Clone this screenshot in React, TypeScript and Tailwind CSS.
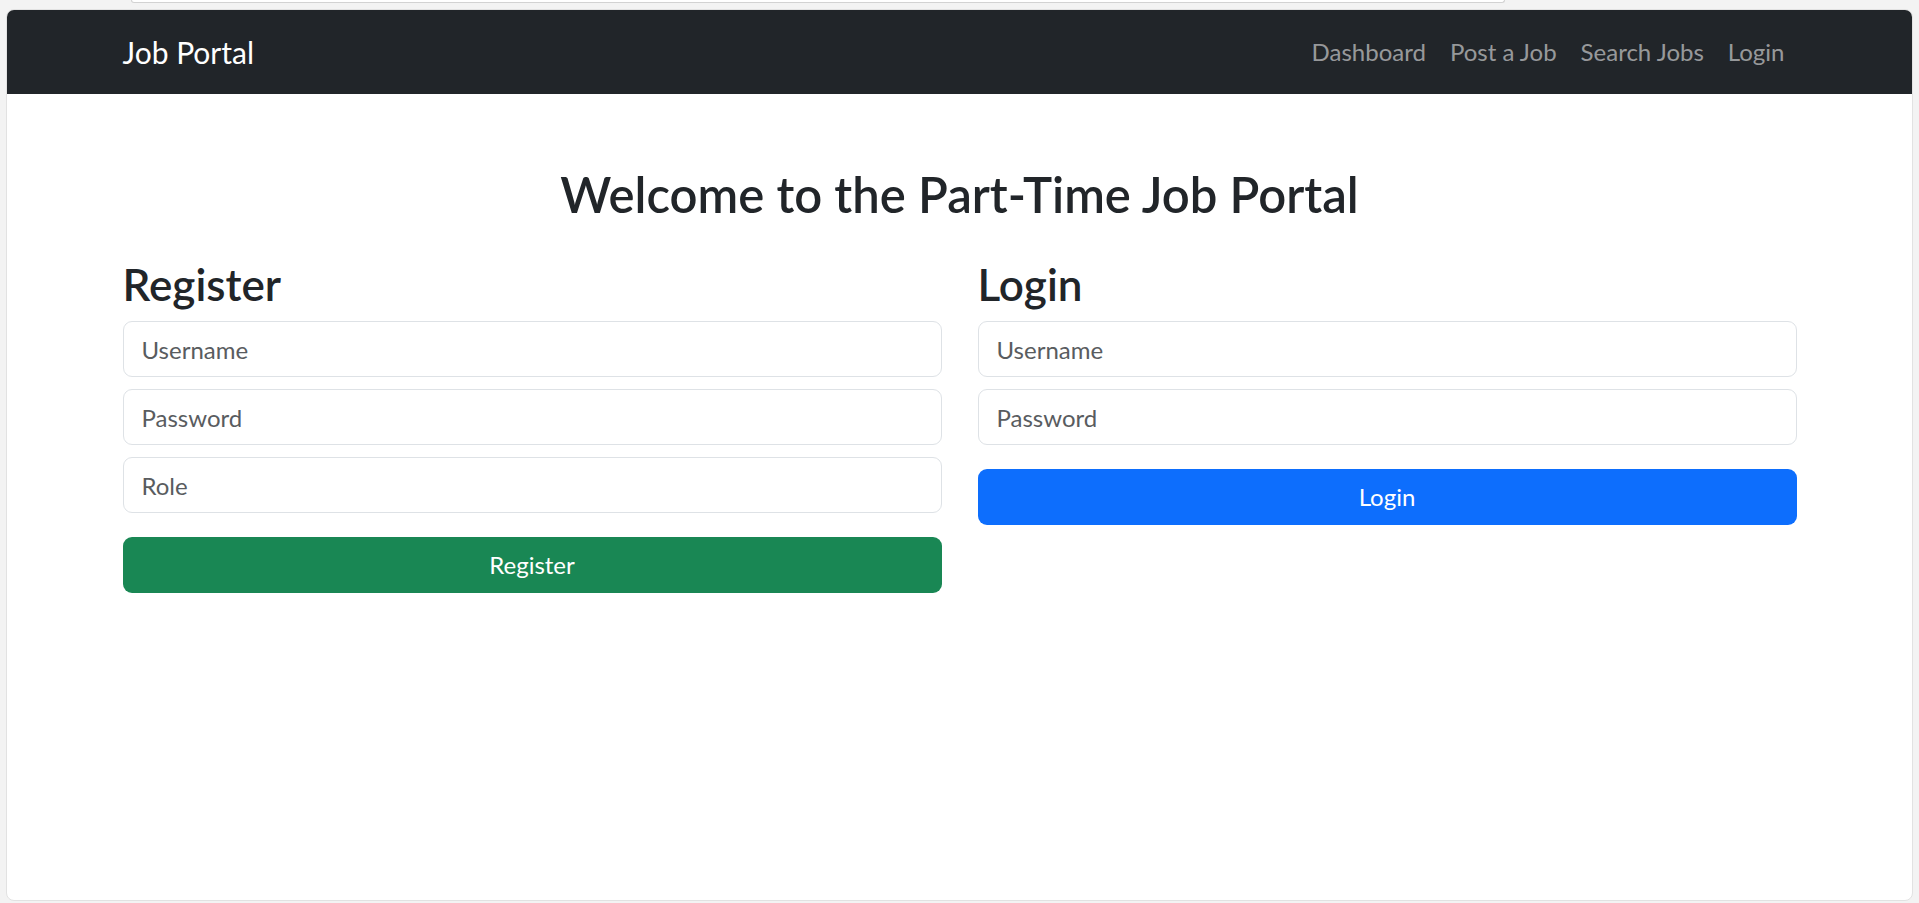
import { useState } from 'react'

const links = ['Dashboard', 'Post a Job', 'Search Jobs', 'Login']

function Field({ placeholder, type = 'text' }: { placeholder: string; type?: string }) {
    return (
        <input
            type={type}
            placeholder={placeholder}
            className="block w-full h-[56px] mb-[12px] px-[18px] text-[24px] text-[#212529] bg-white border border-[#dee2e6] rounded-[9px] outline-none placeholder:text-[#595c5f]"
        />
    )
}

export default function App() {
    const [role, setRole] = useState('')

    return (
        <div className="min-h-screen bg-[#f3f3f3] font-['Lato',sans-serif] text-[#212529]">
            {/* bit of browser chrome peeking in at the top */}
            <div className="h-[9px] pl-[131px]">
                <div className="w-[1374px] h-[3px] bg-white border border-t-0 border-[#d2d2d2] rounded-b-[6px]" />
            </div>

            <div className="mx-[6px] h-[892px] bg-white border border-[#e2e2e2] rounded-[8px] overflow-hidden">
                <nav className="h-[84px] bg-[#212529]">
                    <div className="w-[1710px] h-full mx-auto px-[18px] flex items-center justify-between">
                        <a href="#" className="text-[30px] text-white leading-none">Job Portal</a>
                        <ul className="flex">
                            {links.map((l) => (
                                <li key={l}>
                                    <a href="#" className="block px-[12px] text-[24px] text-[rgba(255,255,255,0.55)]">{l}</a>
                                </li>
                            ))}
                        </ul>
                    </div>
                </nav>

                <main className="w-[1710px] mx-auto px-[18px] pt-[64px]">
                    <h1 className="text-center text-[49px] font-semibold leading-[72px] mb-[25px]">
                        Welcome to the Part-Time Job Portal
                    </h1>

                    <div className="grid grid-cols-2 gap-x-[36px]">
                        <section>
                            <h2 className="text-[44px] font-semibold leading-[58px] mb-[8px]">Register</h2>
                            <Field placeholder="Username" />
                            <Field placeholder="Password" type="password" />
                            <input
                                value={role}
                                onChange={(e) => setRole(e.target.value)}
                                placeholder="Role"
                                className="block w-full h-[56px] px-[18px] text-[24px] text-[#212529] bg-white border border-[#dee2e6] rounded-[9px] outline-none placeholder:text-[#595c5f]"
                            />
                            <button className="mt-[24px] w-full h-[56px] bg-[#198754] text-white text-[24px] rounded-[9px]">
                                Register
                            </button>
                        </section>

                        <section>
                            <h2 className="text-[44px] font-semibold leading-[58px] mb-[8px]">Login</h2>
                            <Field placeholder="Username" />
                            <input
                                type="password"
                                placeholder="Password"
                                className="block w-full h-[56px] px-[18px] text-[24px] text-[#212529] bg-white border border-[#dee2e6] rounded-[9px] outline-none placeholder:text-[#595c5f]"
                            />
                            <button className="mt-[24px] w-full h-[56px] bg-[#0d6efd] text-white text-[24px] rounded-[9px]">
                                Login
                            </button>
                        </section>
                    </div>
                </main>
            </div>
        </div>
    )
}
